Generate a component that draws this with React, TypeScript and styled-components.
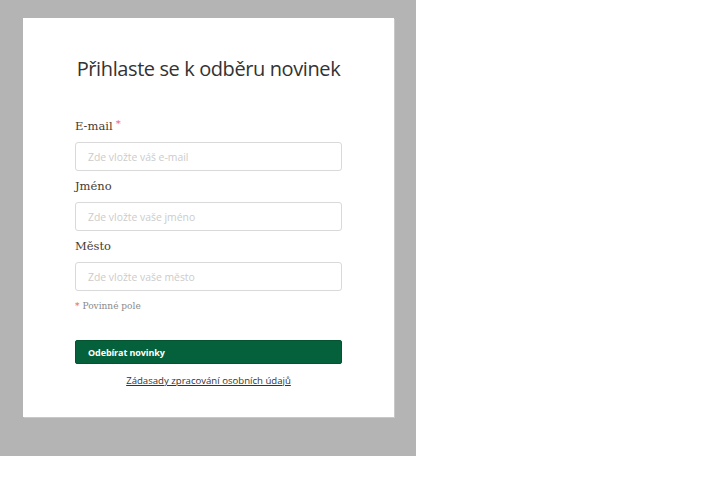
import styled, { createGlobalStyle } from "styled-components";

const GlobalStyle = createGlobalStyle`
  body {
    margin: 0;
    background: #ffffff;
    font-family: "Open Sans", "Liberation Sans", sans-serif;
  }
  * {
    box-sizing: border-box;
  }
`;

const Backdrop = styled.div`
  width: 416px;
  height: 456px;
  padding: 18px 22px 0 23px;
  background-color: #b4b4b4;
`;

const Card = styled.form`
  width: 371px;
  height: 399px;
  padding: 38px 52px 0;
  background-color: #ffffff;
  box-shadow: 1px 1px 0 #c8c8c8;
  display: flex;
  flex-direction: column;
`;

const Title = styled.h2`
  margin: 0 0 36px;
  font-size: 20px;
  line-height: 25px;
  font-weight: 400;
  color: #333333;
  text-align: center;
  letter-spacing: -0.4px;
  white-space: nowrap;
`;

const Fields = styled.div`
  display: flex;
  flex-direction: column;
  gap: 6px;
`;

const Field = styled.div`
  display: flex;
  flex-direction: column;
`;

const Label = styled.label`
  margin-bottom: 7px;
  font-family: "DejaVu Serif", "Liberation Serif", serif;
  font-size: 11.5px;
  line-height: 18px;
  color: #463b31;
`;

const Star = styled.span`
  margin-left: 3px;
  color: #e4606a;
  font-size: 10px;
  vertical-align: top;
  line-height: 14px;
`;

const Input = styled.input`
  height: 29px;
  padding: 0 12px;
  border: 1px solid #d9d9d9;
  border-radius: 3px;
  font-family: "Open Sans", "Liberation Sans", sans-serif;
  font-size: 10.4px;
  color: #333333;
  outline: none;

  &::placeholder {
    color: #cccccc;
  }
`;

const Note = styled.p`
  margin: 8px 0 0;
  font-family: "DejaVu Serif", "Liberation Serif", serif;
  font-size: 9px;
  line-height: 14px;
  color: #8a8a8a;

  span {
    color: #e4606a;
    margin-right: 3px;
  }
`;

const Submit = styled.button`
  margin-top: 27px;
  height: 24px;
  padding: 0 12px;
  border: 1px solid #04552f;
  border-radius: 2px;
  background-color: #05603c;
  color: #ffffff;
  font-family: "Open Sans", "Liberation Sans", sans-serif;
  font-size: 9px;
  font-weight: 700;
  letter-spacing: -0.1px;
  text-align: left;
  cursor: pointer;
`;

const PolicyLink = styled.a`
  margin-top: 10px;
  align-self: center;
  font-size: 9.6px;
  line-height: 14px;
  color: #333333;
  text-decoration: underline;
`;

const fields = [
  { id: "email", label: "E-mail", placeholder: "Zde vložte váš e-mail", required: true },
  { id: "name", label: "Jméno", placeholder: "Zde vložte vaše jméno", required: false },
  { id: "city", label: "Město", placeholder: "Zde vložte vaše město", required: false },
];

export default function App() {
  return (
    <>
      <GlobalStyle />
      <Backdrop>
        <Card onSubmit={(e) => e.preventDefault()}>
          <Title>Přihlaste se k odběru novinek</Title>
          <Fields>
            {fields.map((f) => (
              <Field key={f.id}>
                <Label htmlFor={f.id}>
                  {f.label}
                  {f.required && <Star>*</Star>}
                </Label>
                <Input id={f.id} placeholder={f.placeholder} />
              </Field>
            ))}
          </Fields>
          <Note>
            <span>*</span>Povinné pole
          </Note>
          <Submit type="submit">Odebírat novinky</Submit>
          <PolicyLink href="#">Zádasady zpracování osobních údajů</PolicyLink>
        </Card>
      </Backdrop>
    </>
  );
}
